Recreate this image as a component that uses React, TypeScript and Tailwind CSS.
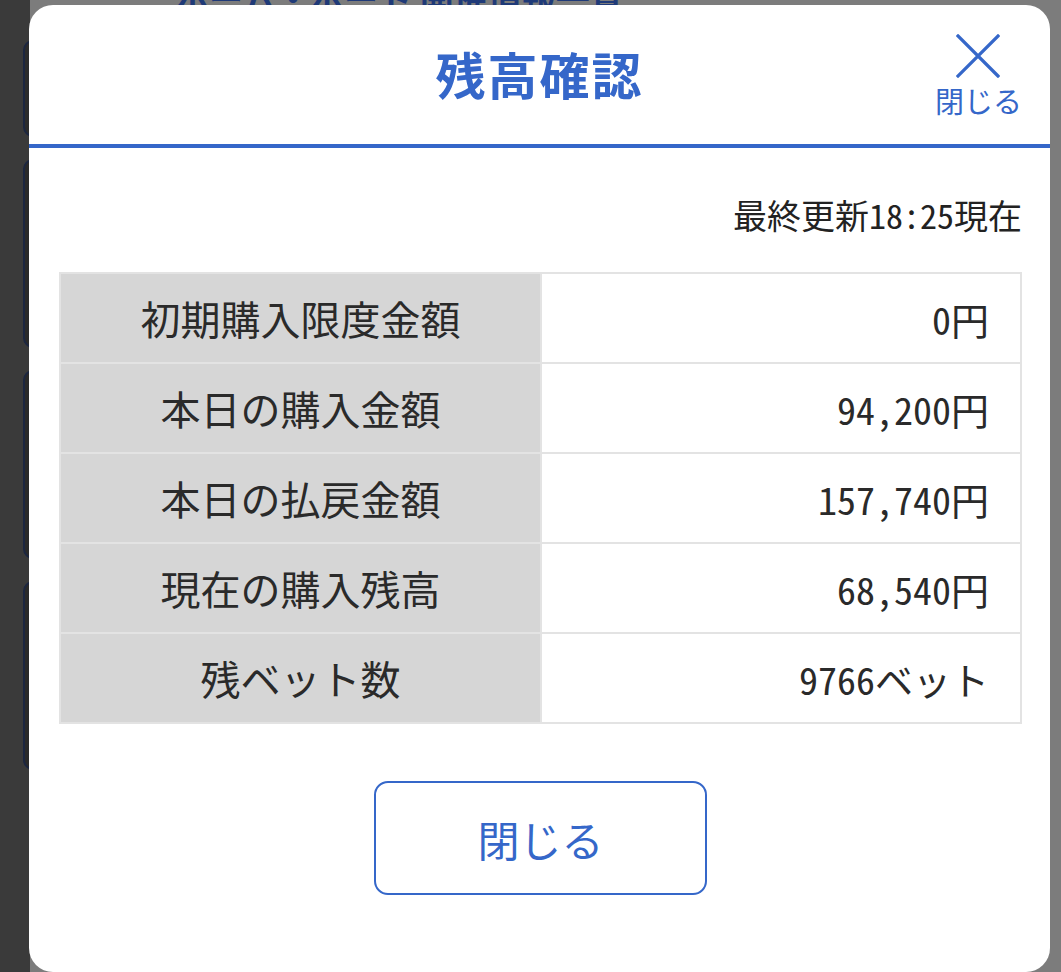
import React from "react";

const rows: { label: string; amount: string; unit: string }[] = [
  { label: "初期購入限度金額", amount: "0", unit: "円" },
  { label: "本日の購入金額", amount: "94,200", unit: "円" },
  { label: "本日の払戻金額", amount: "157,740", unit: "円" },
  { label: "現在の購入残高", amount: "68,540", unit: "円" },
  { label: "残ベット数", amount: "9766", unit: "ベット" },
];

function CloseIcon() {
  return (
    <svg width="44" height="44" viewBox="0 0 44 44" fill="none">
      <path d="M2 2L42 42M42 2L2 42" stroke="#3567c9" strokeWidth="3.2" strokeLinecap="square" />
    </svg>
  );
}

export default function App() {
  return (
    <div
      className="relative h-[972px] w-full overflow-hidden bg-[#7c7c7c]"
      style={{ fontFamily: '"Noto Sans CJK JP", "Noto Sans", sans-serif' }}
    >
      {/* dimmed page behind the dialog */}
      <div className="flex h-full">
        <div className="flex w-[30px] flex-col gap-[22px] overflow-hidden bg-[#3a3a3a] pl-[23px] pt-[40px]">
          <div className="h-[97px] w-[200px] shrink-0 rounded-[10px] border-2 border-[#1c2640] bg-[#2c2c2c]" />
          <div className="h-[189px] w-[200px] shrink-0 rounded-[10px] border-2 border-[#1c2640] bg-[#2a2a2a]" />
          <div className="h-[189px] w-[200px] shrink-0 rounded-[10px] border-2 border-[#1c2640] bg-[#2a2a2a]" />
          <div className="h-[189px] w-[200px] shrink-0 rounded-[10px] border-2 border-[#1c2640] bg-[#2a2a2a]" />
        </div>
        <div className="flex-1 bg-[#7c7c7c]">
          <p className="-mt-[28px] pl-[145px] text-[34px] font-bold text-[#1f3a78]">ホーム・ポート 開催情報一覧</p>
        </div>
      </div>

      {/* dialog */}
      <div className="absolute left-[29px] top-[5px] flex h-[967px] w-[1021px] flex-col rounded-[24px] bg-white">
        <div className="relative flex h-[143px] items-center justify-center border-b-[4px] border-[#3567c9] pb-[2px]">
          <h1 className="text-[50px] font-bold tracking-[2px] text-[#3567c9]">残高確認</h1>
          <button className="absolute right-[28px] top-[29px] flex flex-col items-center text-[#3567c9]">
            <CloseIcon />
            <span className="mt-[4px] text-[29px] leading-[36px]">閉じる</span>
          </button>
        </div>

        <div className="flex flex-col pl-[30px] pr-[28px]">
          <p className="mt-[42px] text-right text-[34px] leading-[50px] text-[#222]">
            最終更新<span className="[font-feature-settings:'hwid']">18:25</span>現在
          </p>

          <table className="mt-[32px] w-full border-collapse border-2 border-[#e3e3e3]">
            <tbody>
              {rows.map((r) => (
                <tr key={r.label} className="h-[90px]">
                  <td className="w-[481px] border-2 border-[#e3e3e3] bg-[#d6d6d6] text-center text-[40px] text-[#2a2a2a]">
                    {r.label}
                  </td>
                  <td className="border-2 border-[#e3e3e3] pr-[31px] text-right text-[38px] text-[#2a2a2a]">
                    <span className="[font-feature-settings:'hwid']">{r.amount}</span>
                    {r.unit}
                  </td>
                </tr>
              ))}
            </tbody>
          </table>

          <div className="mt-[57px] flex justify-center">
            <button className="flex h-[114px] w-[333px] items-center justify-center rounded-[14px] border-2 border-[#3567c9] text-[42px] text-[#3567c9]">
              閉じる
            </button>
          </div>
        </div>
      </div>
    </div>
  );
}
